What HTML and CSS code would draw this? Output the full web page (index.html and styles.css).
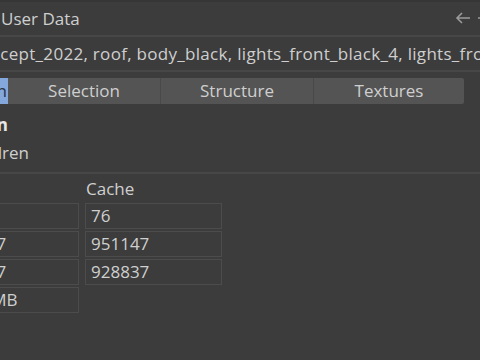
FILE: index.html
```html
<!DOCTYPE html>
<html lang="en">
<head>
  <meta charset="UTF-8">
  <title>User Data</title>
  <link rel="stylesheet" href="styles.css">
</head>
<body>
  <div class="panel">
    <div class="header">
      <span class="title">User Data</span>
      <span class="nav">
        <svg width="16" height="12" viewBox="0 0 16 12"><path d="M15 6H2M7 1L2 6l5 5" fill="none" stroke="#9a9a9a" stroke-width="1.6"/></svg>
        <svg width="16" height="12" viewBox="0 0 16 12"><path d="M1 6h13M9 1l5 5-5 5" fill="none" stroke="#9a9a9a" stroke-width="1.6"/></svg>
      </span>
    </div>
    <div class="objects">Concept_2022, roof, body_black, lights_front_black_4, lights_front_black_5</div>
    <div class="tabs">
      <div class="tab active">Information</div>
      <div class="tab">Selection</div>
      <div class="tab">Structure</div>
      <div class="tab">Textures</div>
    </div>
    <div class="section">
      <div class="sec-title">Information</div>
      <div class="sec-line">Children</div>
    </div>
    <div class="grid">
      <div class="col first">
        <div class="label">Object</div>
        <div class="field">76</div>
        <div class="field">951147</div>
        <div class="field">928837</div>
        <div class="field">1024 MB</div>
      </div>
      <div class="col">
        <div class="label">Cache</div>
        <div class="field">76</div>
        <div class="field">951147</div>
        <div class="field">928837</div>
      </div>
    </div>
  </div>
</body>
</html>
```

FILE: styles.css
```css
html, body { margin: 0; background: #3c3c3c; }
body { font-family: "Open Sans", "Noto Sans", sans-serif; font-size: 17px; color: #cfcfcf; overflow: hidden; width: 480px; height: 360px; }
.panel { width: 480px; overflow: hidden; }
.header { height: 37px; border-top: 2px solid #363636; box-sizing: border-box; border-bottom: 2px solid #474747; display: flex; justify-content: space-between; align-items: center; }
.title { margin-left: 1px; margin-top: -1px; }
.nav { display: flex; gap: 6px; margin-right: -13px; margin-top: -1px; }
.nav svg { display: block; }
.objects { height: 35px; line-height: 33px; border-bottom: 2px solid #474747; box-sizing: border-box; white-space: nowrap; text-indent: -32px; overflow: hidden; letter-spacing: 0.3px; }
.tabs { display: flex; margin: 6px 0 0 -144px; height: 26px; }
.tab { width: 152px; background: #545454; border-right: 1px solid #494949; text-align: center; line-height: 25px; }
.tab.active { background: #84a8dc; color: #2b3340; border-right: none; text-align: right; padding-right: 1px; box-sizing: border-box; }
.tab:last-child { border-right: none; border-radius: 0 2px 2px 0; width: 150px; }
.section { padding: 10px 0 6px; border-bottom: 2px solid #474747; }
.sec-title { font-weight: bold; color: #e8e8e8; margin-left: -200px; width: 208px; text-align: right; line-height: 22px; }
.sec-line { margin-left: -200px; width: 229px; text-align: right; line-height: 26px; margin-top: 4px; }
.grid { display: flex; gap: 6px; margin-top: 4px; margin-left: -58px; }
.col { width: 137px; display: flex; flex-direction: column; gap: 2px; }
.label { line-height: 22px; height: 23px; padding-left: 1px; }
.field { height: 24px; line-height: 24px; border: 1px solid #4c4c4c; padding-left: 5px; }
```
